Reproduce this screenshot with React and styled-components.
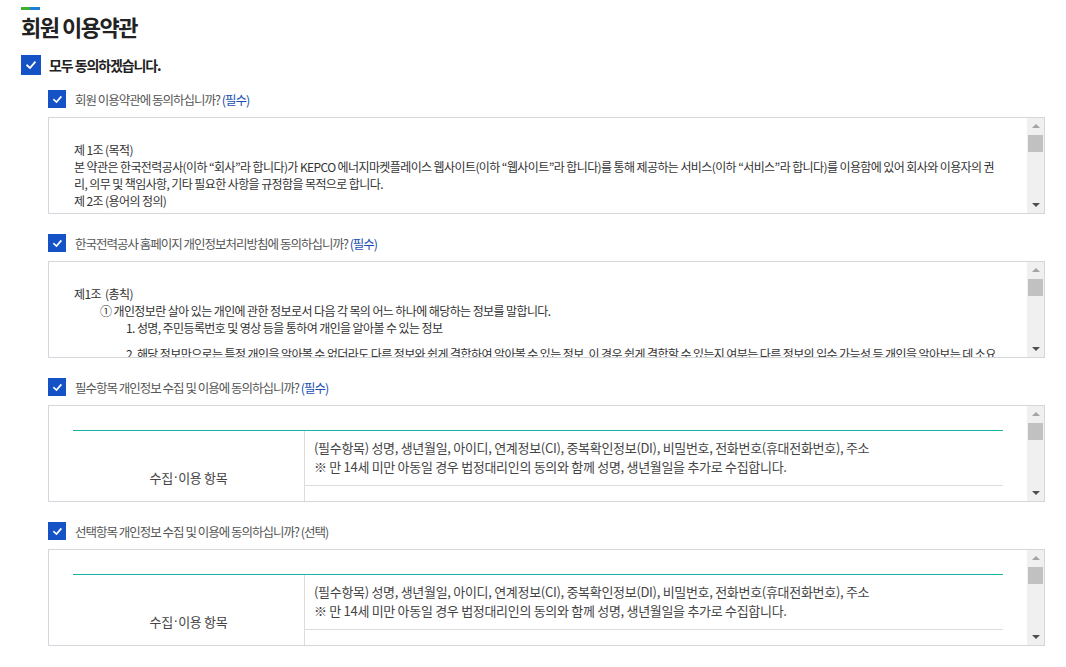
import React from "react";
import styled, { createGlobalStyle } from "styled-components";

const GlobalStyle = createGlobalStyle`
  body {
    margin: 0;
    background: #fff;
    font-family: "Noto Sans CJK KR", "Noto Sans", sans-serif;
  }
`;

const agreeList = [
  { id: 1, label: "회원 이용약관에 동의하십니까?", tag: "(필수)", required: true, kind: "terms" },
  { id: 2, label: "한국전력공사 홈페이지 개인정보처리방침에 동의하십니까?", tag: "(필수)", required: true, kind: "privacy" },
  { id: 3, label: "필수항목 개인정보 수집 및 이용에 동의하십니까?", tag: "(필수)", required: true, kind: "table" },
  { id: 4, label: "선택항목 개인정보 수집 및 이용에 동의하십니까?", tag: "(선택)", required: false, kind: "table" },
];

function CheckIcon({ size }) {
  return (
    <CheckBox $size={size}>
      <svg width={size * 0.6} height={size * 0.6} viewBox="0 0 12 12">
        <polyline points="2.2,6.4 5,9 9.8,3.4" fill="none" stroke="#fff" strokeWidth="1.9" strokeLinecap="square" />
      </svg>
    </CheckBox>
  );
}

function FakeScroll() {
  return (
    <ScrollBar>
      <ArrowUp />
      <Thumb />
      <Spacer />
      <ArrowDown />
    </ScrollBar>
  );
}

function TermsBody() {
  return (
    <BoxBody>
      <Line>제 1조 (목적)</Line>
      <Line>
        본 약관은 한국전력공사(이하 “회사”라 합니다)가 KEPCO 에너지마켓플레이스 웹사이트(이하 “웹사이트”라 합니다)를 통해 제공하는 서비스(이하 “서비스”라 합니다)를 이용함에 있어 회사와 이용자의 권
      </Line>
      <Line>리, 의무 및 책임사항, 기타 필요한 사항을 규정함을 목적으로 합니다.</Line>
      <Line>제 2조 (용어의 정의)</Line>
    </BoxBody>
  );
}

function PrivacyBody() {
  return (
    <BoxBody>
      <Line>제1조&nbsp;&nbsp;(총칙)</Line>
      <Line $indent={27}>① 개인정보란 살아 있는 개인에 관한 정보로서 다음 각 목의 어느 하나에 해당하는 정보를 말합니다.</Line>
      <Line $indent={53}>1. 성명, 주민등록번호 및 영상 등을 통하여 개인을 알아볼 수 있는 정보</Line>
      <Line $indent={53} $gap={9}>
        2. 해당 정보만으로는 특정 개인을 알아볼 수 없더라도 다른 정보와 쉽게 결합하여 알아볼 수 있는 정보. 이 경우 쉽게 결합할 수 있는지 여부는 다른 정보의 입수 가능성 등 개인을 알아보는 데 소요
      </Line>
    </BoxBody>
  );
}

function TableBody() {
  return (
    <TableWrap>
      <InfoTable>
        <HeadCell>
          수집<Dot>·</Dot>이용 항목
        </HeadCell>
        <DataCell>
          (필수항목) 성명, 생년월일, 아이디, 연계정보(CI), 중복확인정보(DI), 비밀번호, 전화번호(휴대전화번호), 주소
          <br />※ 만 14세 미만 아동일 경우 법정대리인의 동의와 함께 성명, 생년월일을 추가로 수집합니다.
        </DataCell>
        <DataCell $last />
      </InfoTable>
    </TableWrap>
  );
}

export default function App() {
  return (
    <>
      <GlobalStyle />
      <Page>
        <TitleBar />
        <Title>회원 이용약관</Title>
        <AllRow>
          <CheckIcon size={20} />
          <AllLabel>모두 동의하겠습니다.</AllLabel>
        </AllRow>
        <Sections>
          {agreeList.map((item) => (
            <Section key={item.id}>
              <LabelRow>
                <CheckIcon size={18} />
                <Label>
                  {item.label} <Tag $required={item.required}>{item.tag}</Tag>
                </Label>
              </LabelRow>
              <Box>
                {item.kind === "terms" && <TermsBody />}
                {item.kind === "privacy" && <PrivacyBody />}
                {item.kind === "table" && <TableBody />}
                <FakeScroll />
              </Box>
            </Section>
          ))}
        </Sections>
      </Page>
    </>
  );
}

const Page = styled.div`
  padding: 7px 21px 0 21px;
  color: #222;
`;

const TitleBar = styled.div`
  width: 19px;
  height: 3px;
  background: linear-gradient(to right, #3fb02c 0 9px, #1a7fd6 9px 19px);
`;

const Title = styled.h2`
  margin: 1px 0 0;
  font-size: 22px;
  line-height: 30px;
  font-weight: 700;
  letter-spacing: -1.5px;
  color: #222;
`;

const AllRow = styled.div`
  display: flex;
  align-items: center;
  gap: 8px;
  margin-top: 14px;
  height: 20px;
`;

const AllLabel = styled.span`
  font-size: 14px;
  font-weight: 700;
  letter-spacing: -1.1px;
  color: #222;
`;

const CheckBox = styled.span`
  display: flex;
  align-items: center;
  justify-content: center;
  width: ${(p) => p.$size}px;
  height: ${(p) => p.$size}px;
  background: #1452c6;
  flex-shrink: 0;
`;

const Sections = styled.div`
  display: flex;
  flex-direction: column;
  gap: 20px;
  margin-top: 15px;
  margin-left: 27px;
`;

const Section = styled.section`
  display: flex;
  flex-direction: column;
`;

const LabelRow = styled.div`
  display: flex;
  align-items: center;
  gap: 9px;
  height: 18px;
`;

const Label = styled.span`
  font-size: 12.5px;
  letter-spacing: -1px;
  color: #555;
`;

const Tag = styled.span`
  color: ${(p) => (p.$required ? "#1a4fb0" : "#555")};
`;

const Box = styled.div`
  margin-top: 9px;
  height: 97px;
  box-sizing: border-box;
  border: 1px solid #d3d6da;
  display: flex;
  background: #fff;
`;

const BoxBody = styled.div`
  flex: 1;
  overflow: hidden;
  padding: 23px 24px 0 24px;
  min-width: 0;
`;

const TableWrap = styled(BoxBody)`
  padding-top: 24px;
`;

const Line = styled.div`
  font-size: 12px;
  line-height: 17px;
  letter-spacing: -0.6px;
  color: #333;
  white-space: nowrap;
  padding-left: ${(p) => p.$indent || 1}px;
  margin-top: ${(p) => p.$gap || 0}px;
`;

const InfoTable = styled.div`
  display: grid;
  grid-template-columns: 232px 1fr;
  grid-template-rows: 55px 39px;
  border-top: 1px solid #17b3a8;
  font-size: 13px;
  color: #444;
  letter-spacing: -0.3px;
`;

const HeadCell = styled.div`
  grid-row: span 2;
  display: flex;
  align-items: center;
  justify-content: center;
  border-right: 1px solid #dcdcdc;
  padding-bottom: 2px;
`;

const Dot = styled.span`
  font-family: "Noto Sans", sans-serif;
  margin: 0 1px;
`;

const DataCell = styled.div`
  padding: 7px 9px 0;
  line-height: 19px;
  white-space: nowrap;
  border-bottom: ${(p) => (p.$last ? "none" : "1px solid #dcdcdc")};
  box-sizing: border-box;
  overflow: hidden;
`;

const ScrollBar = styled.div`
  width: 17px;
  background: #f0f0f0;
  display: flex;
  flex-direction: column;
  align-items: center;
  flex-shrink: 0;
`;

const ArrowUp = styled.div`
  margin-top: 6px;
  width: 0;
  height: 0;
  border-left: 4px solid transparent;
  border-right: 4px solid transparent;
  border-bottom: 4px solid #a3a3a3;
`;

const Thumb = styled.div`
  margin-top: 7px;
  width: 15px;
  height: 17px;
  background: #c1c1c1;
`;

const Spacer = styled.div`
  flex: 1;
`;

const ArrowDown = styled.div`
  margin-bottom: 6px;
  width: 0;
  height: 0;
  border-left: 4px solid transparent;
  border-right: 4px solid transparent;
  border-top: 4px solid #505050;
`;
